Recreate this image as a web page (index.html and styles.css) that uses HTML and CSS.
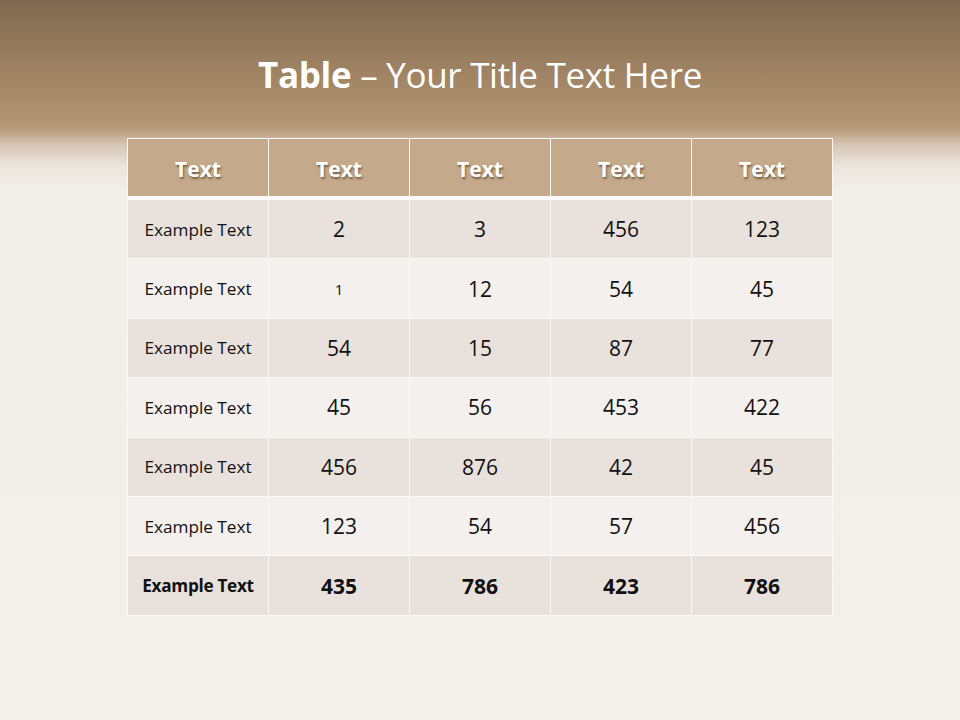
FILE: index.html
```html
<!DOCTYPE html>
<html>
<head>
<meta charset="utf-8">
<link rel="stylesheet" href="styles.css">
</head>
<body>
<div class="slide">
  <h1 class="title"><b>Table</b> – Your Title Text Here</h1>
  <div class="table-wrap">
    <table class="data">
      <thead>
        <tr><th>Text</th><th>Text</th><th>Text</th><th>Text</th><th>Text</th></tr>
      </thead>
      <tbody>
        <tr class="odd"><td class="label">Example Text</td><td>2</td><td>3</td><td>456</td><td>123</td></tr>
        <tr class="even"><td class="label">Example Text</td><td class="small">1</td><td>12</td><td>54</td><td>45</td></tr>
        <tr class="odd"><td class="label">Example Text</td><td>54</td><td>15</td><td>87</td><td>77</td></tr>
        <tr class="even"><td class="label">Example Text</td><td>45</td><td>56</td><td>453</td><td>422</td></tr>
        <tr class="odd"><td class="label">Example Text</td><td>456</td><td>876</td><td>42</td><td>45</td></tr>
        <tr class="even"><td class="label">Example Text</td><td>123</td><td>54</td><td>57</td><td>456</td></tr>
        <tr class="odd total"><td class="label">Example Text</td><td>435</td><td>786</td><td>423</td><td>786</td></tr>
      </tbody>
    </table>
  </div>
</div>
</body>
</html>
```

FILE: styles.css
```css
html, body {
  margin: 0;
  padding: 0;
}
.slide {
  width: 960px;
  height: 720px;
  overflow: hidden;
  font-family: "Open Sans", Lato, sans-serif;
  background: linear-gradient(to bottom,
    #7e6950 0px,
    #9a7f60 60px,
    #b19270 118px,
    #b8997a 128px,
    #d6c5b4 145px,
    #ebe4dc 165px,
    #f2eeea 190px,
    #f3f0ec 720px);
  display: flex;
  flex-direction: column;
  align-items: center;
}
.title {
  margin: 53px 0 0 0;
  height: 85px;
  font-size: 35px;
  font-weight: 400;
  color: #ffffff;
  letter-spacing: -0.3px;
  line-height: 44px;
}
.title b {
  font-weight: 700;
}
.table-wrap {
  width: 706px;
}
.data {
  width: 706px;
  border-collapse: collapse;
  table-layout: fixed;
  border: 1px solid #fbf8f5;
}
.data th, .data td {
  border: 1px solid #fbf8f5;
  text-align: center;
  padding: 0;
  color: #111;
}
.data th {
  height: 55px;
  background: #c5a98b;
  color: #ffffff;
  font-size: 21px;
  font-weight: 700;
  padding-top: 2px;
  text-shadow: 1px 2px 2px rgba(60, 40, 20, 0.55);
  border-bottom: 4px solid #fdfbf9;
}
.data td {
  height: 58.4px;
  font-size: 21px;
}
.data td.label {
  font-size: 17.2px;
}
.data td.small {
  font-size: 15px;
}
.odd td {
  background: #e9e1dc;
}
.even td {
  background: #f4f0ed;
}
.total td {
  font-weight: 700;
}
.total td.label {
  letter-spacing: -0.3px;
}
```
